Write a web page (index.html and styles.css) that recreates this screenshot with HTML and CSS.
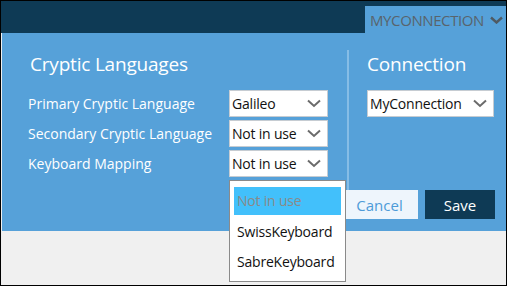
FILE: index.html
```html
<!DOCTYPE html>
<html lang="en">
<head>
  <meta charset="UTF-8">
  <title>Settings</title>
  <link rel="stylesheet" href="styles.css">
</head>
<body>
  <div class="frame">
    <div class="topbar">
      <div class="conn-tab">
        MYCONNECTION
        <svg class="tab-chev" width="13" height="8" viewBox="0 0 13 8"><path d="M1 1.5 L6.5 6.5 L12 1.5" fill="none" stroke="#4f5a63" stroke-width="2.4"/></svg>
      </div>
    </div>

    <div class="panel">
      <div class="columns">
        <section class="col-left">
          <h2>Cryptic Languages</h2>
          <div class="row">
            <span class="label">Primary Cryptic Language</span>
            <div class="select w-small"><span>Galileo</span><svg class="chev" width="14" height="9" viewBox="0 0 14 9"><path d="M1 1.5 L7 7 L13 1.5" fill="none" stroke="#6b6b6b" stroke-width="2"/></svg></div>
          </div>
          <div class="row">
            <span class="label">Secondary Cryptic Language</span>
            <div class="select w-small"><span>Not in use</span><svg class="chev" width="14" height="9" viewBox="0 0 14 9"><path d="M1 1.5 L7 7 L13 1.5" fill="none" stroke="#6b6b6b" stroke-width="2"/></svg></div>
          </div>
          <div class="row">
            <span class="label">Keyboard Mapping</span>
            <div class="select w-small open"><span>Not in use</span><svg class="chev" width="14" height="9" viewBox="0 0 14 9"><path d="M1 1.5 L7 7 L13 1.5" fill="none" stroke="#6b6b6b" stroke-width="2"/></svg>
              <ul class="menu">
                <li class="active">Not in use</li>
                <li>SwissKeyboard</li>
                <li>SabreKeyboard</li>
              </ul>
            </div>
          </div>
        </section>
        <div class="divider"></div>
        <section class="col-right">
          <h2>Connection</h2>
          <div class="row">
            <div class="select w-wide"><span>MyConnection</span><svg class="chev" width="14" height="9" viewBox="0 0 14 9"><path d="M1 1.5 L7 7 L13 1.5" fill="none" stroke="#6b6b6b" stroke-width="2"/></svg></div>
          </div>
        </section>
      </div>
      <div class="actions">
        <button class="btn cancel">Cancel</button>
        <button class="btn save">Save</button>
      </div>
    </div>
  </div>
</body>
</html>
```

FILE: styles.css
```css
body {
  margin: 0;
  font-family: "Segoe UI", "Open Sans", sans-serif;
  background: #fff;
}
.frame {
  width: 507px;
  height: 286px;
  box-sizing: border-box;
  border: 1px solid #000;
  background: #f0f0f0;
  overflow: hidden;
}
.topbar {
  height: 32px;
  background: #0e3a55;
  display: flex;
  justify-content: flex-end;
  align-items: flex-end;
}
.conn-tab {
  width: 141px;
  height: 27px;
  box-sizing: border-box;
  background: #56a1d9;
  color: #59646c;
  font-size: 15px;
  padding-left: 5px;
  display: flex;
  align-items: center;
  gap: 6px;
  letter-spacing: -0.4px;
}
.panel {
  height: 198px;
  margin-left: 1px;
  background: #56a1d9;
  position: relative;
  padding: 17px 11px 0 26px;
  box-sizing: border-box;
}
.columns {
  display: flex;
}
h2 {
  margin: 0 0 12px;
  font-weight: normal;
  font-size: 19px;
  color: #fff;
  line-height: 28px;
  letter-spacing: -0.2px;
}
.col-left {
  width: 300px;
}
.col-left h2 {
  padding-left: 2px;
}
.divider {
  width: 2px;
  background: #86bde6;
  margin-left: 19px;
  height: 140px;
}
.col-right {
  padding-left: 18px;
}
.row {
  display: flex;
  align-items: center;
  height: 27px;
  margin-bottom: 3px;
}
.label {
  width: 201px;
  color: #fff;
  font-size: 14px;
}
.select {
  position: relative;
  height: 27px;
  box-sizing: border-box;
  background: #fff;
  border: 1px solid #c6ccd2;
  display: flex;
  align-items: center;
  justify-content: space-between;
  padding: 0 6px 0 2px;
  font-size: 14px;
  letter-spacing: -0.2px;
  color: #111;
}
.w-small {
  width: 99px;
}
.w-wide {
  width: 127px;
}
.menu {
  position: absolute;
  top: 29px;
  left: -1px;
  width: 117px;
  margin: 0;
  padding: 6px 4px 4px;
  box-sizing: border-box;
  list-style: none;
  background: #fff;
  border: 1px solid #8a8a8a;
  z-index: 2;
}
.menu li {
  height: 30px;
  line-height: 29px;
  padding-left: 3px;
  font-size: 14px;
  color: #111;
}
.menu li.active {
  background: #42c0fb;
  color: #8a8a8a;
  height: 28px;
  line-height: 28px;
  margin-bottom: 2px;
}
.actions {
  position: absolute;
  right: 11px;
  top: 157px;
  display: flex;
  gap: 7px;
}
.btn {
  height: 29px;
  border: none;
  font-family: inherit;
  font-size: 15px;
  padding: 0;
}
.cancel {
  width: 77px;
  background: #eef5fc;
  color: #4d9bd8;
}
.save {
  width: 70px;
  background: #0e3a55;
  color: #fff;
}
```
